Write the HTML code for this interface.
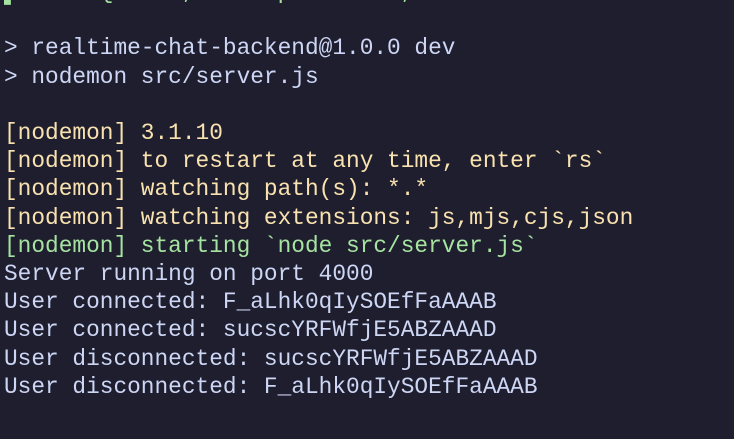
<!DOCTYPE html>
<html><head><style>
html,body{margin:0;padding:0;background:#1e1e2e;width:734px;height:439px;overflow:hidden}
pre{margin:0;position:absolute;left:4px;top:-22px;font-family:"Liberation Mono",monospace;font-size:22.8px;line-height:28.2px;color:#cdd6f4}
.y{color:#f9e2af}.g{color:#a6e3a1}
</style></head><body><pre><span class="g">▌      {     ,      p        ,</span>

&gt; realtime-chat-backend@1.0.0 dev
&gt; nodemon src/server.js

<span class="y">[nodemon] 3.1.10</span>
<span class="y">[nodemon] to restart at any time, enter `rs`</span>
<span class="y">[nodemon] watching path(s): *.*</span>
<span class="y">[nodemon] watching extensions: js,mjs,cjs,json</span>
<span class="g">[nodemon] starting `node src/server.js`</span>
Server running on port 4000
User connected: F_aLhk0qIySOEfFaAAAB
User connected: sucscYRFWfjE5ABZAAAD
User disconnected: sucscYRFWfjE5ABZAAAD
User disconnected: F_aLhk0qIySOEfFaAAAB
</pre></body></html>
